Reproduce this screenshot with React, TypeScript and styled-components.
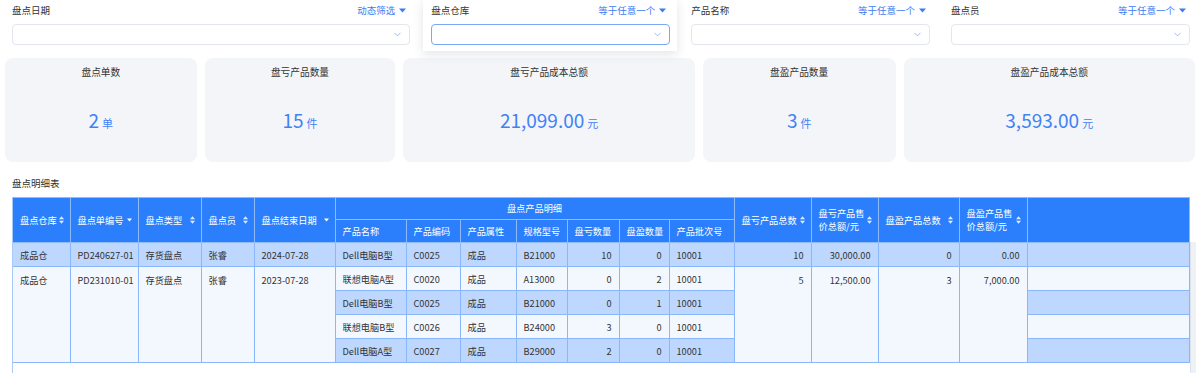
import styled, { createGlobalStyle, css } from "styled-components";
import { ChevronDown } from "lucide-react";

const GlobalStyle = createGlobalStyle`
  html, body {
    margin: 0;
    padding: 0;
    background: #fff;
  }
  body {
    font-family: "Noto Sans CJK SC", "Noto Sans", sans-serif;
    color: #333;
  }
  * {
    box-sizing: border-box;
  }
`;

const Page = styled.div`
  width: 1200px;
  overflow: hidden;
`;

/* ---------- filters ---------- */

const FilterRow = styled.div`
  display: grid;
  grid-template-columns: 5fr 3fr 3fr 3fr;
  column-gap: 21px;
  padding: 0 10px 0 12px;
`;

const Field = styled.div<{ $focused?: boolean }>`
  position: relative;
  background: #fff;
  ${(p) =>
    p.$focused &&
    css`
      margin: 0 -7px -6px -8px;
      padding: 0 7px 6px 8px;
      box-shadow: 0 3px 10px rgba(40, 50, 80, 0.13);
      z-index: 1;
    `}
`;

const FieldHead = styled.div`
  height: 20px;
  display: flex;
  align-items: center;
  justify-content: space-between;
  padding-right: 4px;
  font-size: 9.5px;
  color: #333;
`;

const FilterMode = styled.span`
  display: flex;
  align-items: center;
  gap: 4px;
  color: #3b7cf2;
`;

const SelectBox = styled.div<{ $focused?: boolean }>`
  margin-top: 4px;
  height: 21px;
  border: 1px solid ${(p) => (p.$focused ? "#79a8f7" : "#e3e6ec")};
  border-radius: 4px;
  display: flex;
  align-items: center;
  justify-content: flex-end;
  padding-right: 6px;
  color: #7fa2e3;
`;

const Caret = () => (
  <svg width="7" height="5" viewBox="0 0 7 5">
    <path d="M0 0.5 H7 L3.5 4.5 Z" fill="#3b7cf2" />
  </svg>
);

/* ---------- stats ---------- */

const StatGrid = styled.div`
  display: grid;
  grid-template-columns: 192fr 191fr 292fr 193fr 292fr;
  gap: 8px;
  margin-top: 13px;
  padding: 0 5px;
`;

const StatCard = styled.div`
  height: 104px;
  background: #f4f5f8;
  border-radius: 8px;
  display: flex;
  flex-direction: column;
  align-items: center;
  padding-top: 7px;
`;

const StatTitle = styled.div`
  font-size: 9.7px;
  line-height: 14px;
  color: #333;
`;

const StatValue = styled.div`
  flex: 1;
  display: flex;
  align-items: center;
  color: #3f82f5;
  padding-bottom: 2px;
`;

const StatInner = styled.span`
  display: flex;
  align-items: baseline;
  gap: 3px;
`;

const StatNum = styled.span`
  font-size: 19px;
`;

const StatUnit = styled.span`
  font-size: 11px;
`;

/* ---------- table ---------- */

const SectionTitle = styled.div`
  font-size: 9.5px;
  line-height: 14px;
  margin: 14px 0 7px 12px;
  color: #333;
`;

const TableWrap = styled.div`
  margin-left: 12px;
  width: 1184px;
  height: 200px;
  display: flex;
  align-items: flex-start;
  border-left: 1px solid #a9c9f7;
`;

const ScrollTrack = styled.div`
  width: 7px;
  align-self: stretch;
  margin-top: 45px;
  background: #eef1f6;
  border-left: 1px solid #dde3ec;
`;

const Table = styled.table`
  border-collapse: collapse;
  table-layout: fixed;
  width: 1176px;
  font-size: 9.2px;
  tr > *:first-child {
    border-left: none;
  }
`;

const HeadRow = styled.tr<{ $h: number }>`
  height: ${(p) => p.$h}px;
`;

const Th = styled.th<{ $center?: boolean }>`
  background: #2b7ffd;
  color: #fff;
  font-weight: 400;
  border: 1px solid #8ebbfb;
  padding: 0 7px 0 7px;
  text-align: ${(p) => (p.$center ? "center" : "left")};
  line-height: 13px;
  white-space: nowrap;
`;

const HeadInner = styled.div`
  display: flex;
  align-items: center;
  justify-content: space-between;
  gap: 2px;
  margin-right: -1px;
`;

const BodyRow = styled.tr`
  height: 24px;
`;

const Td = styled.td<{ $alt: boolean; $num?: boolean; $top?: boolean }>`
  background: ${(p) => (p.$alt ? "#f3f8ff" : "#bdd7fe")};
  border: 1px solid #8ab7fb;
  padding: 0 7px 0 7px;
  text-align: ${(p) => (p.$num ? "right" : "left")};
  vertical-align: ${(p) => (p.$top ? "top" : "middle")};
  padding-top: ${(p) => (p.$top ? "6px" : "0")};
  color: #333;
  white-space: nowrap;
  overflow: hidden;
`;

const SortIcon = ({ down }: { down?: boolean }) =>
  down ? (
    <svg width="5" height="4" viewBox="0 0 5 4" style={{ flex: "none" }}>
      <path d="M0 0.5 H5 L2.5 3.5 Z" fill="#fff" />
    </svg>
  ) : (
    <svg width="5" height="8" viewBox="0 0 5 8" style={{ flex: "none" }}>
      <path d="M2.5 0.3 L5 3.2 H0 Z" fill="#fff" opacity="0.85" />
      <path d="M0 4.8 H5 L2.5 7.7 Z" fill="#fff" opacity="0.85" />
    </svg>
  );

type Item = {
  name: string;
  code: string;
  attr: string;
  spec: string;
  loss: number;
  gain: number;
  batch: string;
};

type Record = {
  warehouse: string;
  no: string;
  type: string;
  staff: string;
  date: string;
  items: Item[];
  lossTotal: number;
  lossAmount: string;
  gainTotal: number;
  gainAmount: string;
};

const records: Record[] = [
  {
    warehouse: "成品仓",
    no: "PD240627-01",
    type: "存货盘点",
    staff: "张睿",
    date: "2024-07-28",
    items: [
      { name: "Dell电脑B型", code: "C0025", attr: "成品", spec: "B21000", loss: 10, gain: 0, batch: "10001" },
    ],
    lossTotal: 10,
    lossAmount: "30,000.00",
    gainTotal: 0,
    gainAmount: "0.00",
  },
  {
    warehouse: "成品仓",
    no: "PD231010-01",
    type: "存货盘点",
    staff: "张睿",
    date: "2023-07-28",
    items: [
      { name: "联想电脑A型", code: "C0020", attr: "成品", spec: "A13000", loss: 0, gain: 2, batch: "10001" },
      { name: "Dell电脑B型", code: "C0025", attr: "成品", spec: "B21000", loss: 0, gain: 1, batch: "10001" },
      { name: "联想电脑B型", code: "C0026", attr: "成品", spec: "B24000", loss: 3, gain: 0, batch: "10001" },
      { name: "Dell电脑A型", code: "C0027", attr: "成品", spec: "B29000", loss: 2, gain: 0, batch: "10001" },
    ],
    lossTotal: 5,
    lossAmount: "12,500.00",
    gainTotal: 3,
    gainAmount: "7,000.00",
  },
];

const colWidths = [57, 68, 63, 53, 81, 71, 54, 56, 51, 52, 50, 65, 77, 67, 81, 68, 162];

const stats = [
  { title: "盘点单数", value: "2", unit: "单" },
  { title: "盘亏产品数量", value: "15", unit: "件" },
  { title: "盘亏产品成本总额", value: "21,099.00", unit: "元" },
  { title: "盘盈产品数量", value: "3", unit: "件" },
  { title: "盘盈产品成本总额", value: "3,593.00", unit: "元" },
];

const filters = [
  { label: "盘点日期", mode: "动态筛选" },
  { label: "盘点仓库", mode: "等于任意一个", focused: true },
  { label: "产品名称", mode: "等于任意一个" },
  { label: "盘点员", mode: "等于任意一个" },
];

const HeadCell = ({
  children,
  down,
  rowSpan,
}: {
  children: React.ReactNode;
  down?: boolean;
  rowSpan?: number;
}) => (
  <Th rowSpan={rowSpan}>
    <HeadInner>
      <span>{children}</span>
      <SortIcon down={down} />
    </HeadInner>
  </Th>
);

export default function App() {
  let rowIdx = 0;
  const rows: React.ReactNode[] = [];
  records.forEach((r) => {
    const span = r.items.length;
    r.items.forEach((it, i) => {
      const alt = rowIdx % 2 === 1;
      const groupAlt = (rowIdx - i) % 2 === 1;
      rows.push(
        <BodyRow key={r.no + i}>
          {i === 0 && (
            <>
              <Td rowSpan={span} $alt={groupAlt} $top={span > 1}>{r.warehouse}</Td>
              <Td rowSpan={span} $alt={groupAlt} $top={span > 1}>{r.no}</Td>
              <Td rowSpan={span} $alt={groupAlt} $top={span > 1}>{r.type}</Td>
              <Td rowSpan={span} $alt={groupAlt} $top={span > 1}>{r.staff}</Td>
              <Td rowSpan={span} $alt={groupAlt} $top={span > 1}>{r.date}</Td>
            </>
          )}
          <Td $alt={alt}>{it.name}</Td>
          <Td $alt={alt}>{it.code}</Td>
          <Td $alt={alt}>{it.attr}</Td>
          <Td $alt={alt}>{it.spec}</Td>
          <Td $alt={alt} $num>{it.loss}</Td>
          <Td $alt={alt} $num>{it.gain}</Td>
          <Td $alt={alt}>{it.batch}</Td>
          {i === 0 && (
            <>
              <Td rowSpan={span} $alt={groupAlt} $num $top={span > 1}>{r.lossTotal}</Td>
              <Td rowSpan={span} $alt={groupAlt} $num $top={span > 1}>{r.lossAmount}</Td>
              <Td rowSpan={span} $alt={groupAlt} $num $top={span > 1}>{r.gainTotal}</Td>
              <Td rowSpan={span} $alt={groupAlt} $num $top={span > 1}>{r.gainAmount}</Td>
            </>
          )}
          <Td $alt={alt} />
        </BodyRow>
      );
      rowIdx++;
    });
  });

  return (
    <Page>
      <GlobalStyle />
      <FilterRow>
        {filters.map((f) => (
          <Field key={f.label} $focused={f.focused}>
            <FieldHead>
              <span>{f.label}</span>
              <FilterMode>
                {f.mode}
                <Caret />
              </FilterMode>
            </FieldHead>
            <SelectBox $focused={f.focused}>
              <ChevronDown size={11} strokeWidth={1.6} />
            </SelectBox>
          </Field>
        ))}
      </FilterRow>

      <StatGrid>
        {stats.map((s) => (
          <StatCard key={s.title}>
            <StatTitle>{s.title}</StatTitle>
            <StatValue>
              <StatInner>
                <StatNum>{s.value}</StatNum>
                <StatUnit>{s.unit}</StatUnit>
              </StatInner>
            </StatValue>
          </StatCard>
        ))}
      </StatGrid>

      <SectionTitle>盘点明细表</SectionTitle>

      <TableWrap>
        <Table>
          <colgroup>
            {colWidths.map((w, i) => (
              <col key={i} style={{ width: w }} />
            ))}
          </colgroup>
          <thead>
            <HeadRow $h={22}>
              <HeadCell rowSpan={2}>盘点仓库</HeadCell>
              <HeadCell rowSpan={2} down>盘点单编号</HeadCell>
              <HeadCell rowSpan={2}>盘点类型</HeadCell>
              <HeadCell rowSpan={2}>盘点员</HeadCell>
              <HeadCell rowSpan={2} down>盘点结束日期</HeadCell>
              <Th colSpan={7} $center>盘点产品明细</Th>
              <HeadCell rowSpan={2}>盘亏产品总数</HeadCell>
              <HeadCell rowSpan={2}>
                盘亏产品售
                <br />
                价总额/元
              </HeadCell>
              <HeadCell rowSpan={2}>盘盈产品总数</HeadCell>
              <HeadCell rowSpan={2}>
                盘盈产品售
                <br />
                价总额/元
              </HeadCell>
              <Th rowSpan={2} />
            </HeadRow>
            <HeadRow $h={23}>
              <Th>产品名称</Th>
              <Th>产品编码</Th>
              <Th>产品属性</Th>
              <Th>规格型号</Th>
              <Th>盘亏数量</Th>
              <Th>盘盈数量</Th>
              <Th>产品批次号</Th>
            </HeadRow>
          </thead>
          <tbody>{rows}</tbody>
        </Table>
        <ScrollTrack />
      </TableWrap>
    </Page>
  );
}
